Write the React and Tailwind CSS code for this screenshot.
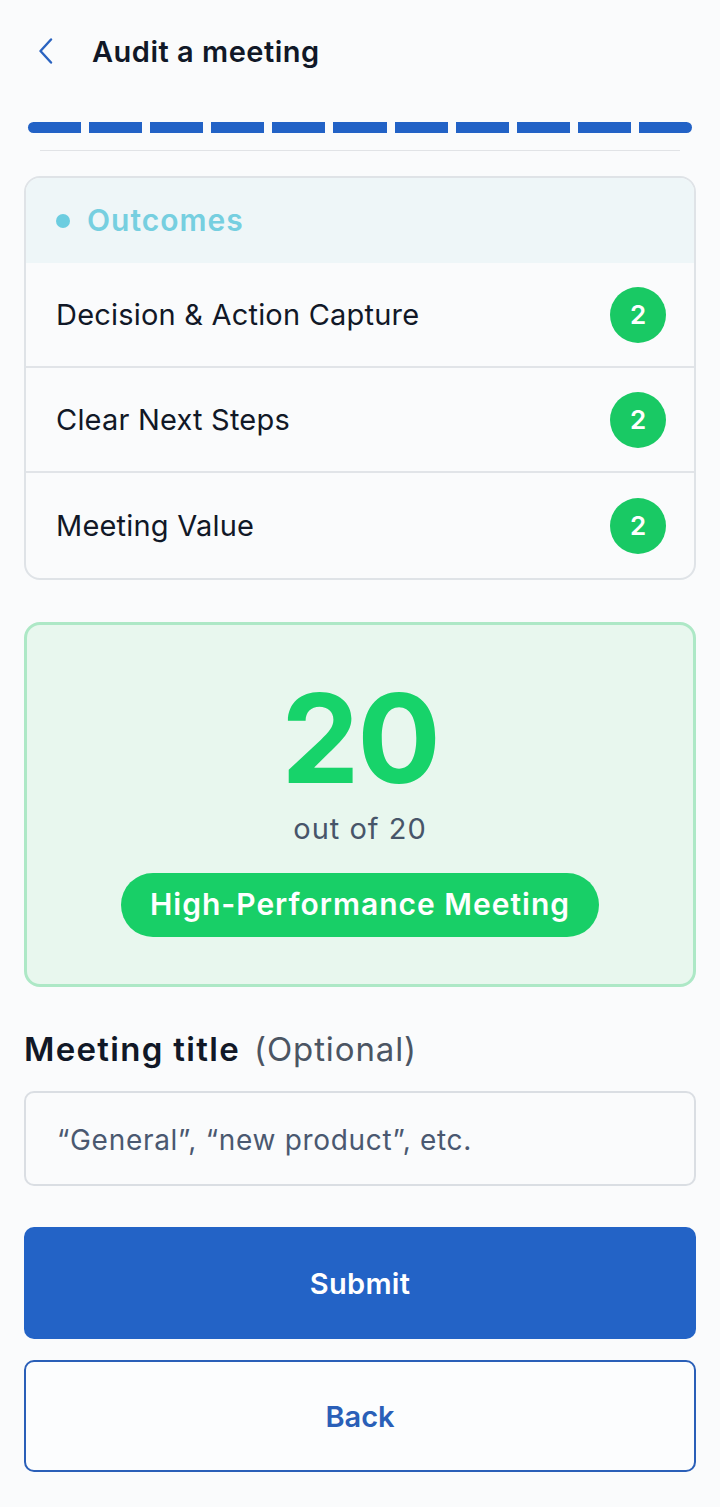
import React from "react";

const font = { fontFamily: "Inter, 'Noto Sans', sans-serif" };

function Row({ label, last }) {
  return (
    <div className={`flex h-[105px] items-center justify-between pl-[30px] pr-[28px] ${last ? "" : "border-b-2 border-[#e1e4e8]"}`}>
      <span className="text-[29px] text-[#111827] tracking-[0.2px]">{label}</span>
      <span className="flex h-[56px] w-[56px] items-center justify-center rounded-full bg-[#19c964] text-[26px] font-semibold text-white">2</span>
    </div>
  );
}

export default function App() {
  const segs = Array.from({ length: 11 });
  return (
    <div style={font} className="min-h-[1507px] w-[720px] bg-[#fafbfc] px-[24px]">
      <div className="flex h-[100px] items-center pt-[4px]">
        <svg width="16" height="26" viewBox="0 0 16 26" className="ml-[14px] mt-[-2px]" fill="none">
          <path d="M13 1.5 L2.5 13 L13 24.5" stroke="#2a63c0" strokeWidth="2.4" strokeLinecap="round" strokeLinejoin="round" />
        </svg>
        <h1 className="ml-[38px] text-[29px] font-semibold tracking-[0.5px] text-[#111827]">Audit a meeting</h1>
      </div>

      <div className="mt-[22px] flex gap-[8px] px-[4px]">
        {segs.map((_, i) => (
          <div
            key={i}
            className={`h-[11px] flex-1 bg-[#2262c6] ${i === 0 ? "rounded-l-full" : ""} ${i === 10 ? "rounded-r-full" : ""}`}
          />
        ))}
      </div>
      <div className="mx-[16px] mt-[17px] h-[1px] bg-[#e1e3e6]" />

      <div className="mt-[25px] overflow-hidden rounded-[16px] border-2 border-[#dfe3e7]">
        <div className="flex h-[85px] items-center bg-[#eef6f8] pl-[30px]">
          <span className="h-[14px] w-[14px] rounded-full bg-[#6ccde0]" />
          <span className="ml-[17px] text-[30px] font-semibold tracking-[1px] text-[#76cfe0]">Outcomes</span>
        </div>
        <Row label="Decision & Action Capture" />
        <Row label="Clear Next Steps" />
        <Row label="Meeting Value" last />
      </div>

      <div className="mt-[42px] flex h-[365px] flex-col items-center rounded-[16px] border-[3px] border-[#ade8c6] bg-[#e8f7ee]">
        <div className="mt-[38px] text-[124px] font-bold leading-[150px] tracking-[-2px] text-[#17d36a]">20</div>
        <div className="mt-[-6px] text-[29px] tracking-[1px] text-[#475569]">out of 20</div>
        <div className="mt-[22px] flex h-[64px] w-[478px] items-center justify-center rounded-full bg-[#18cf67] text-[30px] font-semibold tracking-[1px] text-white">
          High-Performance Meeting
        </div>
      </div>

      <div className="mt-[38px] flex items-baseline">
        <span className="text-[33px] font-semibold tracking-[1.3px] text-[#111827]">Meeting title</span>
        <span className="ml-[14px] text-[33px] tracking-[0.9px] text-[#4b5563]">(Optional)</span>
      </div>

      <div className="mt-[16px] flex h-[95px] items-center rounded-[10px] border-2 border-[#dadee3] pl-[31px] pt-[4px]">
        <span className="text-[28px] tracking-[0.7px] text-[#4a5870]">“General”, “new product”, etc.</span>
      </div>

      <button className="mt-[41px] flex h-[112px] w-full items-center justify-center rounded-[10px] bg-[#2363c6] pt-[3px] text-[29px] font-semibold tracking-[0.3px] text-white">
        Submit
      </button>
      <button className="mt-[21px] flex h-[112px] w-full items-center justify-center rounded-[10px] border-2 border-[#2a5fb8] bg-[#fcfdfe] pt-[3px] text-[29px] font-semibold text-[#2a5fb8]">
        Back
      </button>
    </div>
  );
}
